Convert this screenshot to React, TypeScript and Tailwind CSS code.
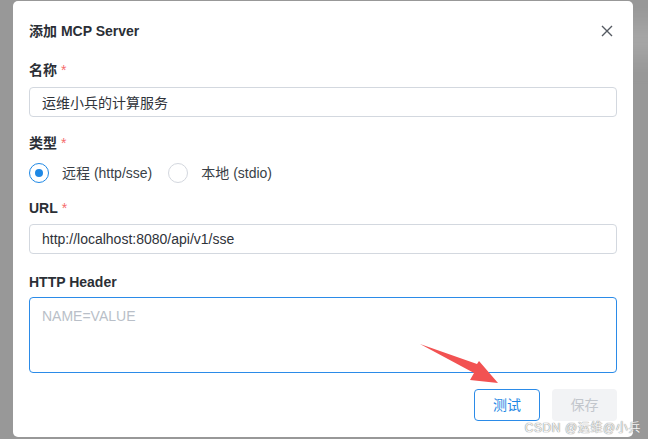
import { useState } from 'react'

const font = { fontFamily: '"Liberation Sans", "Noto Sans CJK SC", sans-serif' }

function Label({ text, required }: { text: string; required?: boolean }) {
  return (
    <div className="h-[20px] leading-[20px] text-[14px] font-semibold text-[#2b2f36]">
      {text}
      {required && <span className="ml-[4px] font-normal text-[#f56c6c]">*</span>}
    </div>
  )
}

function Radio({ label, checked, onClick }: { label: string; checked: boolean; onClick: () => void }) {
  return (
    <button type="button" onClick={onClick} className="flex items-center gap-[13px]">
      <span
        className={
          checked
            ? 'flex h-[20px] w-[20px] items-center justify-center rounded-full border-[1.5px] border-[#1e88e5]'
            : 'flex h-[20px] w-[20px] items-center justify-center rounded-full border border-[#d3d7de]'
        }
      >
        {checked && <span className="h-[8px] w-[8px] rounded-full bg-[#1e88e5]" />}
      </span>
      <span className="text-[14px] text-[#3a3f47]">{label}</span>
    </button>
  )
}

export default function App() {
  const [type, setType] = useState('remote')

  return (
    <div className="relative h-[439px] w-[648px] overflow-hidden bg-[#989898]" style={font}>
      <div className="absolute left-[560px] top-[25px] h-[30px] w-[120px] bg-[#a8a8a8] blur-md" />
      <div className="relative ml-[13px] mt-[1px] flex h-[436px] w-[620px] flex-col rounded-[5px] bg-white px-[16px] pb-[16px] pt-[19px]">
        <div className="flex h-[22px] items-center justify-between">
          <span className="text-[14px] font-semibold text-[#2b2f36]">添加 MCP Server</span>
          <svg width="12" height="12" viewBox="0 0 12 12" className="mr-[4px]">
            <path d="M1 1L11 11M11 1L1 11" stroke="#555a62" strokeWidth="1.4" />
          </svg>
        </div>

        <div className="mt-[18px]">
          <Label text="名称" required />
        </div>
        <input
          readOnly
          value="运维小兵的计算服务"
          className="mt-[7px] h-[30px] w-full rounded-[4px] border border-[#d3d8df] px-[12px] text-[14px] text-[#2f333a] outline-none"
        />

        <div className="mt-[16px]">
          <Label text="类型" required />
        </div>
        <div className="mt-[8px] flex h-[24px] items-center gap-[16px]">
          <Radio label="远程 (http/sse)" checked={type === 'remote'} onClick={() => setType('remote')} />
          <Radio label="本地 (stdio)" checked={type === 'local'} onClick={() => setType('local')} />
        </div>

        <div className="mt-[13px]">
          <Label text="URL" required />
        </div>
        <input
          readOnly
          value="http://localhost:8080/api/v1/sse"
          className="mt-[6px] h-[30px] w-full rounded-[4px] border border-[#d3d8df] px-[12px] text-[14px] text-[#2f333a] outline-none"
        />

        <div className="mt-[18px]">
          <Label text="HTTP Header" />
        </div>
        <textarea
          placeholder="NAME=VALUE"
          className="mt-[5px] h-[76px] w-full resize-none rounded-[4px] border border-[#2b8be8] px-[12px] py-[8px] text-[14px] leading-[20px] text-[#2f333a] outline-none placeholder:text-[#b9bfc8]"
        />

        <div className="mt-[16px] flex justify-end gap-[12px]">
          <button className="h-[32px] w-[66px] rounded-[4px] border border-[#2b8be8] text-[14px] text-[#1e88e5]">
            测试
          </button>
          <button className="h-[32px] w-[65px] rounded-[4px] bg-[#f2f3f5] text-[14px] text-[#c2c6cc]">
            保存
          </button>
        </div>
      </div>

      <svg className="absolute left-0 top-0" width="648" height="439" viewBox="0 0 648 439">
        <path d="M420 344 L477 364 L479 361 L498 383 L470 380 L474 373 Z" fill="#f25252" />
      </svg>

      <div
        className="absolute right-[7px] top-[419px] text-[12px] tracking-[0.6px] text-[#f4f4f4]"
        style={{ textShadow: '0 0 1px #888, 0 0 1px #888' }}
      >
        CSDN @运维@小兵
      </div>
    </div>
  )
}
